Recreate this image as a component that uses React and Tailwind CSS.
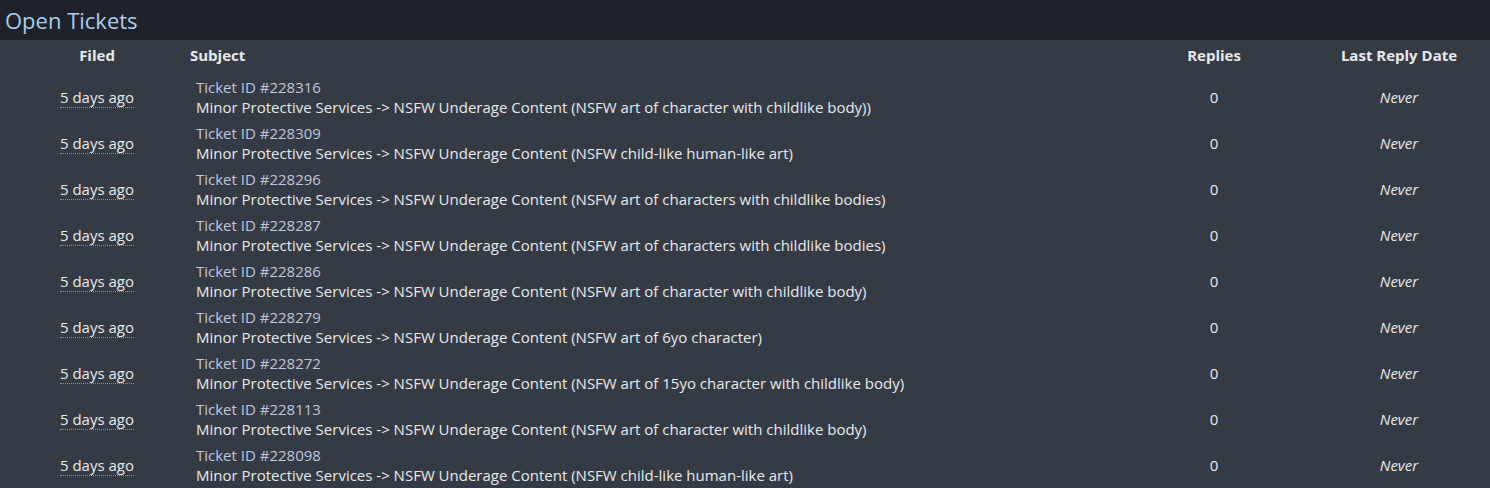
import React from 'react';

const tickets = [
    { id: '228316', reason: 'NSFW art of character with childlike body)' },
    { id: '228309', reason: 'NSFW child-like human-like art' },
    { id: '228296', reason: 'NSFW art of characters with childlike bodies' },
    { id: '228287', reason: 'NSFW art of characters with childlike bodies' },
    { id: '228286', reason: 'NSFW art of character with childlike body' },
    { id: '228279', reason: 'NSFW art of 6yo character' },
    { id: '228272', reason: 'NSFW art of 15yo character with childlike body' },
    { id: '228113', reason: 'NSFW art of character with childlike body' },
    { id: '228098', reason: 'NSFW child-like human-like art' }
];

const App = () => {
    return (
        <div className="w-[1490px] h-[488px] overflow-hidden bg-[#353b45] text-[#e8e9ec] text-[15px]" style={{ fontFamily: '"Open Sans", sans-serif' }}>
            <div className="h-10 bg-[#1f222a] flex items-center px-[5px]">
                <h1 className="text-[22px] text-[#a8cfec] leading-none">Open Tickets</h1>
            </div>
            <table className="w-full border-collapse table-fixed">
                <colgroup>
                    <col className="w-[194px]" />
                    <col />
                    <col className="w-[172px]" />
                    <col className="w-[182px]" />
                </colgroup>
                <thead>
                    <tr className="font-bold h-[34px] leading-[20px]">
                        <th className="text-center align-top pt-[5px]">Filed</th>
                        <th className="text-left align-top pt-[5px]"><span className="-ml-1">Subject</span></th>
                        <th className="text-center align-top pt-[5px]"><span className="-ml-4">Replies</span></th>
                        <th className="text-center align-top pt-[5px]">Last Reply Date</th>
                    </tr>
                </thead>
                <tbody>
                    {tickets.map((t) => (
                        <tr key={t.id} className="h-[46px]">
                            <td className="text-center">
                                <span className="border-b border-dotted border-[#8a909c] leading-[19px] inline-block">5 days ago</span>
                            </td>
                            <td className="pl-[2px] leading-[20px] py-[3px]">
                                <div className="text-[#c0c6dc]">Ticket ID #{t.id}</div>
                                <div>Minor Protective Services -&gt; NSFW Underage Content ({t.reason})</div>
                            </td>
                            <td className="text-center"><span className="-ml-4 inline-block">0</span></td>
                            <td className="text-center italic">Never</td>
                        </tr>
                    ))}
                </tbody>
            </table>
        </div>
    );
};

export default App;
